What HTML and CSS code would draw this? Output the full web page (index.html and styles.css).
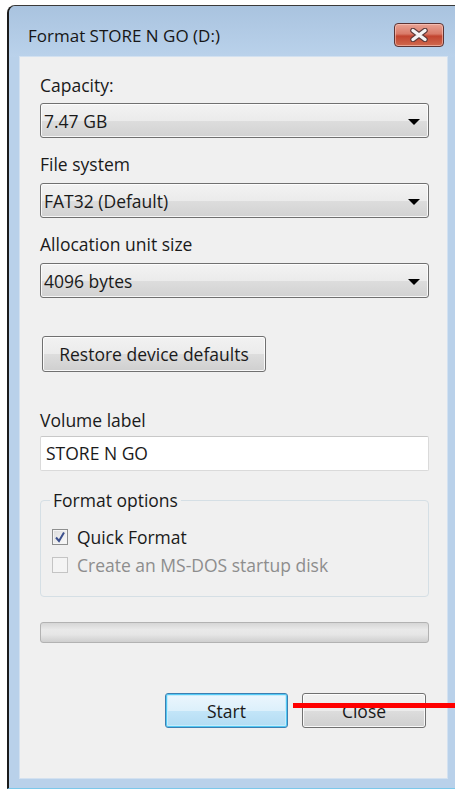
FILE: index.html
```html
<!DOCTYPE html>
<html lang="en">
<head>
<meta charset="utf-8">
<title>Format STORE N GO (D:)</title>
<link rel="stylesheet" href="styles.css">
</head>
<body>
<div class="window">
  <div class="titlebar">
    <span class="title">Format STORE N GO (D:)</span>
    <button class="close-x" aria-label="Close">
      <svg width="20" height="14" viewBox="0 0 20 14">
        <path d="M4 2.5 L16 11.5 M16 2.5 L4 11.5" stroke="#5a3a3a" stroke-width="5.5" stroke-linecap="round" fill="none"/>
        <path d="M4 2.5 L16 11.5 M16 2.5 L4 11.5" stroke="#f4f4f4" stroke-width="3.4" stroke-linecap="round" fill="none"/>
      </svg>
    </button>
  </div>
  <div class="frame">
    <div class="client">
      <div class="label l-first">Capacity:</div>
      <div class="combo"><span>7.47 GB</span><i class="arrow"></i></div>

      <div class="label">File system</div>
      <div class="combo"><span>FAT32 (Default)</span><i class="arrow"></i></div>

      <div class="label">Allocation unit size</div>
      <div class="combo"><span>4096 bytes</span><i class="arrow"></i></div>

      <button class="btn restore">Restore device defaults</button>

      <div class="label l-volume">Volume label</div>
      <div class="textbox">STORE N GO</div>

      <fieldset class="group">
        <legend>Format options</legend>
        <div class="check-row">
          <span class="check on">
            <svg width="12" height="12" viewBox="0 0 12 12"><path d="M2 6.5 L5 10 L10 1.5" stroke="#3b4f8c" stroke-width="2" fill="none"/></svg>
          </span>
          <span>Quick Format</span>
        </div>
        <div class="check-row disabled">
          <span class="check"></span>
          <span>Create an MS-DOS startup disk</span>
        </div>
      </fieldset>

      <div class="progress"></div>

      <div class="actions">
        <button class="btn start">Start</button>
        <button class="btn close">Close</button>
      </div>
    </div>
  </div>
</div>
<div class="marker"></div>
</body>
</html>
```

FILE: styles.css
```css
html, body {
  margin: 0;
  padding: 0;
  background: #ffffff;
  overflow: hidden;
  height: 790px;
}

body {
  font-family: "Open Sans", "Noto Sans", sans-serif;
  font-size: 17.5px;
  color: #1a1a1a;
}

.window {
  margin: 5px 0 0 7px;
  width: 458px;
  border-left: 2px solid #1b1b1b;
  border-top: 1px solid #3a3a3a;
  border-bottom: 1px solid #7cc8ea;
  border-radius: 8px 0 0 0;
  background: #b9d1ea;
}

.titlebar {
  height: 51px;
  display: flex;
  align-items: flex-start;
  justify-content: space-between;
  padding-left: 19px;
  background: linear-gradient(#a9c3df, #bad2eb);
  border-radius: 7px 0 0 0;
}

.title {
  margin-top: 20px;
  line-height: 20px;
  font-size: 17px;
  color: #161616;
}

.close-x {
  margin: 17px 23px 0 0;
  width: 50px;
  height: 24px;
  padding: 0;
  border: 1px solid #5c3434;
  border-radius: 4px;
  background: linear-gradient(#e8a394 0%, #d97a68 45%, #c2442f 55%, #cf6a4f 100%);
  box-shadow: inset 0 0 0 1px rgba(255, 210, 200, 0.55);
  display: flex;
  align-items: center;
  justify-content: center;
}

.frame {
  padding: 0 20px 10px 11px;
}

.client {
  width: 389px;
  height: 721px;
  padding: 0 18px 0 20px;
  box-sizing: content-box;
  background: #f0f0f0;
  box-shadow: 0 0 0 1px #d3e1f0;
  display: flex;
  flex-direction: column;
  align-items: stretch;
}

.label {
  height: 20px;
  line-height: 20px;
  margin-top: 16px;
  margin-bottom: 9px;
}

.l-first {
  margin-top: 18px;
  margin-bottom: 8px;
}

.combo {
  height: 35px;
  box-sizing: border-box;
  border: 1px solid #707070;
  border-radius: 3px;
  background: linear-gradient(#f3f3f3 0%, #ebebeb 50%, #dddddd 51%, #d2d2d2 100%);
  box-shadow: inset 0 0 0 1px rgba(255, 255, 255, 0.8);
  display: flex;
  align-items: center;
  justify-content: space-between;
  padding: 0 8px 0 3px;
}

.arrow {
  width: 0;
  height: 0;
  border-left: 6px solid transparent;
  border-right: 6px solid transparent;
  border-top: 6px solid #000000;
  margin-top: 2px;
}

.btn {
  font-family: inherit;
  font-size: 17.5px;
  color: #1a1a1a;
  box-sizing: border-box;
  border: 1px solid #707070;
  border-radius: 3px;
  background: linear-gradient(#f2f2f2 0%, #ebebeb 50%, #dddddd 51%, #cfcfcf 100%);
  box-shadow: inset 0 0 0 1px rgba(255, 255, 255, 0.85);
  padding: 0;
}

.restore {
  align-self: flex-start;
  margin: 38px 0 0 2px;
  width: 224px;
  height: 36px;
}

.l-volume {
  margin-top: 38px;
  margin-bottom: 6px;
}

.textbox {
  height: 35px;
  box-sizing: border-box;
  border: 1px solid #dadada;
  border-top-color: #c8c8c8;
  border-radius: 2px;
  background: #ffffff;
  line-height: 33px;
  padding-left: 5px;
}

.group {
  margin: 19px 0 0 0;
  padding: 13px 0 17px 11px;
  border: 1px solid #d5dfe5;
  border-radius: 4px;
  min-width: 0;
}

.group legend {
  padding: 0 3px;
  margin-left: -2px;
  line-height: 20px;
}

.check-row {
  height: 28px;
  display: flex;
  align-items: center;
  gap: 9px;
}

.check {
  width: 16px;
  height: 16px;
  box-sizing: border-box;
  border: 1px solid #8e8f8f;
  background: linear-gradient(135deg, #dcdcdc, #fbfbfb);
  box-shadow: inset 0 0 0 1px #f4f4f4;
  display: flex;
  align-items: center;
  justify-content: center;
}

.disabled {
  color: #8d8d8d;
}

.disabled .check {
  border-color: #c4c4c4;
  background: #f4f4f4;
}

.progress {
  margin-top: 25px;
  height: 21px;
  box-sizing: border-box;
  border: 1px solid #b2b2b2;
  border-radius: 3px;
  background: linear-gradient(#d6d6d6 0%, #e9e9e9 35%, #e6e6e6 60%, #cfcfcf 100%);
}

.actions {
  margin: 50px 3px 0 0;
  display: flex;
  justify-content: flex-end;
  gap: 14px;
}

.start,
.close {
  height: 35px;
}

.start {
  width: 123px;
  border-color: #3c7fb1;
  background: linear-gradient(#ecf6fd 0%, #dcf0fb 50%, #c3e5f8 51%, #b2dcf3 100%);
  box-shadow: inset 0 0 0 1px #52c8f4, inset 0 0 0 2px #c6ecfb;
}

.close {
  width: 124px;
}

.marker {
  position: absolute;
  left: 293px;
  top: 703px;
  width: 170px;
  height: 5px;
  background: #ff0000;
}
```
